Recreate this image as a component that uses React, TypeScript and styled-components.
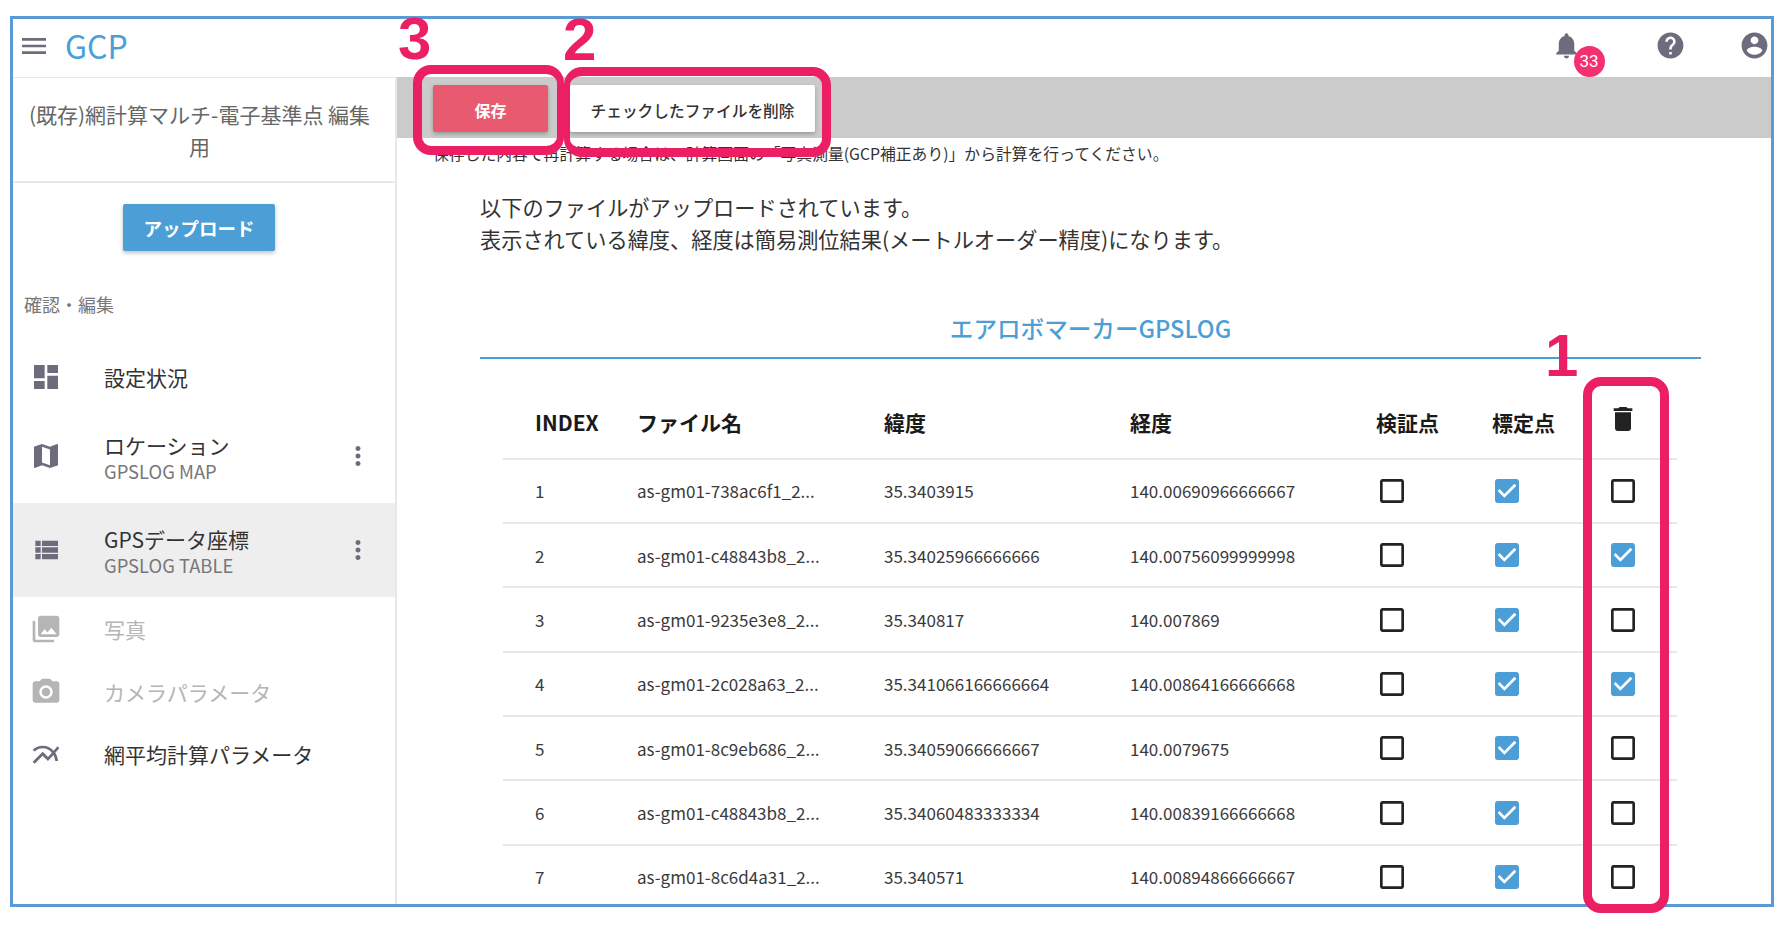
import React from "react";
import styled, { createGlobalStyle } from "styled-components";

const Global = createGlobalStyle`
  html, body { margin: 0; padding: 0; background: #fff; }
  body { font-family: "Noto Sans CJK JP", "Noto Sans", sans-serif; color: #333; }
`;

const P = {
  menu: "M3 18h18v-2H3v2zm0-5h18v-2H3v2zm0-7v2h18V6H3z",
  dashboard: "M3 13h8V3H3v10zm0 8h8v-6H3v6zm10 0h8V11h-8v10zm0-18v6h8V3h-8z",
  map: "M20.5 3l-.16.03L15 5.1 9 3 3.36 4.9c-.21.07-.36.25-.36.48V20.5c0 .28.22.5.5.5l.16-.03L9 18.9l6 2.1 5.64-1.9c.21-.07.36-.25.36-.48V3.5c0-.28-.22-.5-.5-.5zM15 19l-6-2.11V5l6 2.11V19z",
  list: "M4 14h4v-4H4v4zm0 5h4v-4H4v4zM4 9h4V5H4v4zm5 5h12v-4H9v4zm0 5h12v-4H9v4zM9 5v4h12V5H9z",
  photos: "M22 16V4c0-1.1-.9-2-2-2H8c-1.1 0-2 .9-2 2v12c0 1.1.9 2 2 2h12c1.1 0 2-.9 2-2zm-11-4l2.03 2.71L16 11l4 5H8l3-4zM2 6v14c0 1.1.9 2 2 2h14v-2H4V6H2z",
  camera: "M12 8.8a3.2 3.2 0 1 0 0 6.4 3.2 3.2 0 0 0 0-6.4zM9 2L7.17 4H4c-1.1 0-2 .9-2 2v12c0 1.1.9 2 2 2h16c1.1 0 2-.9 2-2V6c0-1.1-.9-2-2-2h-3.17L15 2H9zm3 15c-2.76 0-5-2.24-5-5s2.24-5 5-5 5 2.24 5 5-2.24 5-5 5z",
  chart: "M22 6.92l-1.41-1.41-2.85 3.21C15.68 6.4 12.83 5 9.61 5 6.72 5 4.07 6.16 2 8l1.42 1.42C5.12 7.93 7.27 7 9.61 7c2.74 0 5.09 1.26 6.77 3.24l-2.88 3.24-4-4L2 16.99l1.5 1.5 6-6.01 4 4 4.05-4.55c.75 1.35 1.25 2.9 1.44 4.55H21c-.22-2.3-.95-4.39-2.04-6.14L22 6.92z",
  more: "M12 8c1.1 0 2-.9 2-2s-.9-2-2-2-2 .9-2 2 .9 2 2 2zm0 2c-1.1 0-2 .9-2 2s.9 2 2 2 2-.9 2-2-.9-2-2-2zm0 6c-1.1 0-2 .9-2 2s.9 2 2 2 2-.9 2-2-.9-2-2-2z",
  bell: "M12 22c1.1 0 2-.9 2-2h-4c0 1.1.89 2 2 2zm6-6v-5c0-3.07-1.64-5.64-4.5-6.32V4c0-.83-.67-1.5-1.5-1.5s-1.5.67-1.5 1.5v.68C7.63 5.36 6 7.92 6 11v5l-2 2v1h16v-1l-2-2z",
  help: "M12 2C6.48 2 2 6.48 2 12s4.48 10 10 10 10-4.48 10-10S17.52 2 12 2zm1 17h-2v-2h2v2zm2.07-7.75l-.9.92C13.45 12.9 13 13.5 13 15h-2v-.5c0-1.1.45-2.1 1.17-2.83l1.24-1.26c.37-.36.59-.86.59-1.41 0-1.1-.9-2-2-2s-2 .9-2 2H8c0-2.21 1.79-4 4-4s4 1.79 4 4c0 .88-.36 1.68-.93 2.25z",
  account: "M12 2C6.48 2 2 6.48 2 12s4.48 10 10 10 10-4.48 10-10S17.52 2 12 2zm0 3c1.66 0 3 1.34 3 3s-1.34 3-3 3-3-1.34-3-3 1.34-3 3-3zm0 14.2c-2.5 0-4.71-1.28-6-3.22.03-1.99 4-3.08 6-3.08 1.99 0 5.97 1.09 6 3.08-1.29 1.94-3.5 3.22-6 3.22z",
  trash: "M6 19c0 1.1.9 2 2 2h8c1.1 0 2-.9 2-2V7H6v12zM19 4h-3.5l-1-1h-5l-1 1H5v2h14V4z",
  unchecked: "M19 5v14H5V5h14m0-2H5c-1.1 0-2 .9-2 2v14c0 1.1.9 2 2 2h14c1.1 0 2-.9 2-2V5c0-1.1-.9-2-2-2z",
  checked: "M19 3H5c-1.11 0-2 .9-2 2v14c0 1.1.89 2 2 2h14c1.11 0 2-.9 2-2V5c0-1.1-.89-2-2-2zm-9 14l-5-5 1.41-1.41L10 14.17l7.59-7.59L19 8l-9 9z",
};

const Svg = styled.svg`
  display: block;
  flex: none;
`;

const Icon = ({ d, size, color }: { d: string; size: number; color: string }) => (
  <Svg width={size} height={size} viewBox="0 0 24 24" fill={color}>
    <path d={d} />
  </Svg>
);

const Page = styled.div`
  position: relative;
  width: 1790px;
  height: 932px;
  overflow: hidden;
`;
const Frame = styled.div`
  position: relative;
  box-sizing: border-box;
  margin: 16px 16px 0 10px;
  width: 1764px;
  height: 891px;
  border: 3px solid #5b9bd5;
  display: flex;
  flex-direction: column;
  overflow: hidden;
`;
const TopBar = styled.header`
  height: 58px;
  flex: none;
  display: flex;
  align-items: center;
  padding-left: 5px;
  background: #fff;
`;
const MenuSlot = styled.div`
  margin-top: -5px;
`;
const Logo = styled.span`
  margin-left: 15px;
  margin-top: -7px;
  color: #4c9fd6;
  font-size: 32px;
  font-weight: 400;
  line-height: 1;
`;
const TopIcons = styled.div`
  margin-left: auto;
  display: flex;
  align-items: center;
  height: 100%;
`;
const TopIconSlot = styled.div<{ $w: number; $ml?: number; $mr?: number }>`
  position: relative;
  width: ${(p) => p.$w}px;
  margin-left: ${(p) => p.$ml ?? 0}px;
  margin-right: ${(p) => p.$mr ?? 0}px;
  display: flex;
  justify-content: center;
  margin-top: -6px;
`;
const Badge = styled.span`
  position: absolute;
  left: 23.5px;
  top: 16px;
  width: 31px;
  height: 31px;
  border-radius: 50%;
  background: #f5306f;
  color: #fff;
  font-family: "Roboto", sans-serif;
  font-size: 17px;
  display: flex;
  align-items: center;
  justify-content: center;
`;
const Body = styled.div`
  flex: 1;
  min-height: 0;
  display: flex;
`;
const Sidebar = styled.aside`
  width: 384px;
  flex: none;
  box-sizing: border-box;
  border-right: 2px solid #e8e8e8;
  border-top: 1px solid #e8e8e8;
  display: flex;
  flex-direction: column;
`;
const SideTitle = styled.div`
  height: 105px;
  box-sizing: border-box;
  border-bottom: 2px solid #e8e8e8;
  padding: 20px 21px 0 12px;
  text-align: center;
  font-size: 21px;
  line-height: 32px;
  color: #666;
`;
const UploadWrap = styled.div`
  display: flex;
  justify-content: center;
  padding: 21px 10px 0 0;
`;
const UploadButton = styled.button`
  width: 152px;
  height: 47px;
  border: 0;
  border-radius: 2px;
  background: #4c9fd6;
  color: #fff;
  font: 700 18.5px "Noto Sans CJK JP", sans-serif;
  box-shadow: 0 2px 4px rgba(0, 0, 0, 0.25);
`;
const SectionLabel = styled.div`
  margin-top: 41px;
  padding-left: 11px;
  font-size: 18px;
  line-height: 24px;
  color: #777;
`;
const Nav = styled.nav`
  margin-top: 29px;
  display: flex;
  flex-direction: column;
`;
const NavRow = styled.div<{ $tall?: boolean; $active?: boolean; $first?: boolean }>`
  height: ${(p) => (p.$tall ? 94 : p.$first ? 64 : 63)}px;
  display: flex;
  align-items: center;
  padding-left: 17px;
  background: ${(p) => (p.$active ? "#eeeeee" : "transparent")};
`;
const NavText = styled.div<{ $first?: boolean }>`
  margin-left: 42px;
  flex: 1;
  min-width: 0;
  padding-top: ${(p) => (p.$first ? 0 : 2)}px;
`;
const NavTitle = styled.div<{ $off?: boolean }>`
  font-size: 21px;
  line-height: 27px;
  color: ${(p) => (p.$off ? "#b5b5b5" : "#333")};
`;
const NavSub = styled.div`
  font-size: 18.4px;
  line-height: 24px;
  color: #777;
`;
const Kebab = styled.div`
  margin-right: 22px;
`;
const Main = styled.main`
  flex: 1;
  min-width: 0;
  display: flex;
  flex-direction: column;
`;
const ActionBar = styled.div`
  height: 61px;
  flex: none;
  box-sizing: border-box;
  padding: 2px 0 0 36px;
  background: #cbcbcb;
  display: flex;
  align-items: center;
  gap: 22px;
`;
const SaveButton = styled.button`
  width: 115px;
  height: 47px;
  border: 0;
  padding: 3px 0 0;
  border-radius: 2px;
  background: #e85a70;
  color: #fff;
  font: 700 16px "Noto Sans CJK JP", sans-serif;
  box-shadow: 0 2px 4px rgba(0, 0, 0, 0.25);
`;
const DeleteButton = styled.button`
  width: 245px;
  height: 47px;
  border: 0;
  padding: 3px 0 0;
  border-radius: 2px;
  background: #fff;
  color: #333;
  font: 500 15.7px "Noto Sans CJK JP", sans-serif;
  box-shadow: 0 2px 4px rgba(0, 0, 0, 0.25);
`;
const Note = styled.p`
  margin: 3.5px 0 0 36px;
  font-size: 15.8px;
  line-height: 24px;
  color: #333;
`;
const Content = styled.div`
  padding: 0 70px 0 83px;
`;
const Lead = styled.p`
  margin: 25.5px 0 0;
  font-size: 21.2px;
  line-height: 32px;
  color: #333;
`;
const TableTitle = styled.div`
  margin-top: 57px;
  height: 44.7px;
  border-bottom: 2px solid #4c9fd6;
  text-align: center;
  color: #4c9fd6;
  font-size: 23.6px;
  font-weight: 500;
  line-height: 32px;
`;
const Table = styled.div`
  margin: 35px 24px 0 23px;
`;
const Row = styled.div<{ $head?: boolean }>`
  display: grid;
  grid-template-columns: 102px 247px 246px 246px 116px 116px 1fr;
  height: ${(p) => (p.$head ? 66 : 64.35)}px;
  box-sizing: border-box;
  border-bottom: 2px solid #e8e8e8;
  align-items: center;
  font-size: 17px;
  color: #3a3a3a;
`;
const HeadCell = styled.div`
  padding-left: 32px;
  margin-top: -8px;
  font-size: 21px;
  font-weight: 700;
  color: #1a1a1a;
`;
const Cell = styled.div`
  padding-left: 32px;
  white-space: nowrap;
`;
const BoxCell = styled.div<{ $pad: number }>`
  padding-left: ${(p) => p.$pad}px;
`;
const TrashCell = styled.div`
  padding-left: 31px;
  margin-top: -14px;
`;
const Pen = styled.div<{ $x: number; $y: number; $w: number; $h: number; $l: number; $r: number }>`
  position: absolute;
  box-sizing: border-box;
  left: ${(p) => p.$x}px;
  top: ${(p) => p.$y}px;
  width: ${(p) => p.$w}px;
  height: ${(p) => p.$h}px;
  border: 9px solid #ec1f64;
  border-left-width: ${(p) => p.$l}px;
  border-right-width: ${(p) => p.$r}px;
  border-radius: 18px;
  pointer-events: none;
`;
const Numeral = styled.div<{ $x: number; $y: number }>`
  position: absolute;
  left: ${(p) => p.$x}px;
  top: ${(p) => p.$y}px;
  font: 700 60px/60px "Liberation Sans", sans-serif;
  color: #ec1f64;
`;

const rows = [
  ["1", "as-gm01-738ac6f1_2...", "35.3403915", "140.00690966666667", false],
  ["2", "as-gm01-c48843b8_2...", "35.34025966666666", "140.00756099999998", true],
  ["3", "as-gm01-9235e3e8_2...", "35.340817", "140.007869", false],
  ["4", "as-gm01-2c028a63_2...", "35.341066166666664", "140.00864166666668", true],
  ["5", "as-gm01-8c9eb686_2...", "35.34059066666667", "140.0079675", false],
  ["6", "as-gm01-c48843b8_2...", "35.34060483333334", "140.00839166666668", false],
  ["7", "as-gm01-8c6d4a31_2...", "35.340571", "140.00894866666667", false],
] as const;

const Box = ({ on }: { on: boolean }) =>
  on ? <Icon d={P.checked} size={32} color="#4c9fd6" /> : <Icon d={P.unchecked} size={32} color="#222" />;

export default function App() {
  const grey = "#6c6c7c";
  return (
    <Page>
      <Global />
      <Frame>
        <TopBar>
          <MenuSlot>
            <Icon d={P.menu} size={32} color={grey} />
          </MenuSlot>
          <Logo>GCP</Logo>
          <TopIcons>
            <TopIconSlot $w={32}>
              <Icon d={P.bell} size={31} color={grey} />
              <Badge>33</Badge>
            </TopIconSlot>
            <TopIconSlot $w={85} $ml={46}>
              <Icon d={P.help} size={31} color={grey} />
            </TopIconSlot>
            <TopIconSlot $w={83} $mr={-25}>
              <Icon d={P.account} size={31} color={grey} />
            </TopIconSlot>
          </TopIcons>
        </TopBar>
        <Body>
          <Sidebar>
            <SideTitle>(既存)網計算マルチ-電子基準点 編集用</SideTitle>
            <UploadWrap>
              <UploadButton>アップロード</UploadButton>
            </UploadWrap>
            <SectionLabel>確認・編集</SectionLabel>
            <Nav>
              <NavRow $first>
                <Icon d={P.dashboard} size={32} color={grey} />
                <NavText $first>
                  <NavTitle>設定状況</NavTitle>
                </NavText>
              </NavRow>
              <NavRow $tall>
                <Icon d={P.map} size={32} color={grey} />
                <NavText>
                  <NavTitle>ロケーション</NavTitle>
                  <NavSub>GPSLOG MAP</NavSub>
                </NavText>
                <Kebab>
                  <Icon d={P.more} size={30} color={grey} />
                </Kebab>
              </NavRow>
              <NavRow $tall $active>
                <Icon d={P.list} size={32} color={grey} />
                <NavText>
                  <NavTitle>GPSデータ座標</NavTitle>
                  <NavSub>GPSLOG TABLE</NavSub>
                </NavText>
                <Kebab>
                  <Icon d={P.more} size={30} color={grey} />
                </Kebab>
              </NavRow>
              <NavRow>
                <Icon d={P.photos} size={32} color="#b5b5b5" />
                <NavText>
                  <NavTitle $off>写真</NavTitle>
                </NavText>
              </NavRow>
              <NavRow>
                <Icon d={P.camera} size={32} color="#b5b5b5" />
                <NavText>
                  <NavTitle $off>カメラパラメータ</NavTitle>
                </NavText>
              </NavRow>
              <NavRow>
                <Icon d={P.chart} size={32} color={grey} />
                <NavText $first>
                  <NavTitle>網平均計算パラメータ</NavTitle>
                </NavText>
              </NavRow>
            </Nav>
          </Sidebar>
          <Main>
            <ActionBar>
              <SaveButton>保存</SaveButton>
              <DeleteButton>チェックしたファイルを削除</DeleteButton>
            </ActionBar>
            <Note>保存した内容で再計算する場合は、計算画面の「写真測量(GCP補正あり)」から計算を行ってください。</Note>
            <Content>
              <Lead>
                以下のファイルがアップロードされています。
                <br />
                表示されている緯度、経度は簡易測位結果(メートルオーダー精度)になります。
              </Lead>
              <TableTitle>エアロボマーカーGPSLOG</TableTitle>
              <Table>
                <Row $head>
                  <HeadCell>INDEX</HeadCell>
                  <HeadCell>ファイル名</HeadCell>
                  <HeadCell>緯度</HeadCell>
                  <HeadCell>経度</HeadCell>
                  <HeadCell>検証点</HeadCell>
                  <HeadCell>標定点</HeadCell>
                  <TrashCell>
                    <Icon d={P.trash} size={32} color="#222" />
                  </TrashCell>
                </Row>
                {rows.map((r) => (
                  <Row key={r[0]}>
                    <Cell>{r[0]}</Cell>
                    <Cell>{r[1]}</Cell>
                    <Cell>{r[2]}</Cell>
                    <Cell>{r[3]}</Cell>
                    <BoxCell $pad={32}>
                      <Box on={false} />
                    </BoxCell>
                    <BoxCell $pad={31}>
                      <Box on />
                    </BoxCell>
                    <BoxCell $pad={31}>
                      <Box on={r[4]} />
                    </BoxCell>
                  </Row>
                ))}
              </Table>
            </Content>
          </Main>
        </Body>
      </Frame>
      <Pen $x={413} $y={65} $w={151} $h={90} $l={9} $r={7} />
      <Pen $x={564} $y={67} $w={267} $h={90} $l={6} $r={9} />
      <Pen $x={1583} $y={377} $w={86} $h={536} $l={9} $r={9} />
      <Numeral $x={398} $y={9}>3</Numeral>
      <Numeral $x={563} $y={10}>2</Numeral>
      <Numeral $x={1545} $y={326}>1</Numeral>
    </Page>
  );
}
